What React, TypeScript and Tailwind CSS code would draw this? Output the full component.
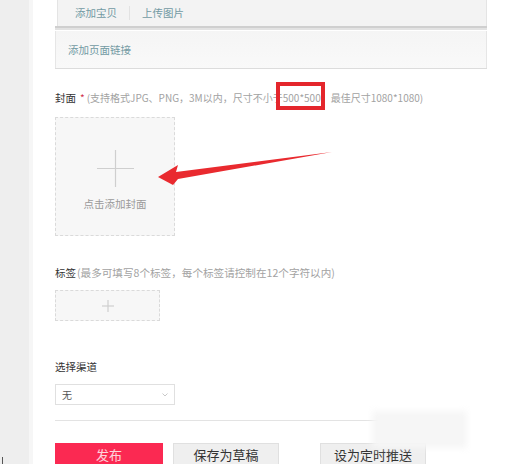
const font = { fontFamily: '"Noto Sans CJK SC", "Noto Sans", sans-serif' };

function Plus({ size, className }: { size: number; className?: string }) {
  return (
    <svg width={size} height={size} viewBox={`0 0 ${size} ${size}`} className={className}>
      <line x1={0} y1={size / 2} x2={size} y2={size / 2} stroke="#cfcfcf" strokeWidth={1.2} />
      <line x1={size / 2} y1={0} x2={size / 2} y2={size} stroke="#cfcfcf" strokeWidth={1.2} />
    </svg>
  );
}

function TopPanel() {
  return (
    <div className="w-[432px] shrink-0 border-b border-[#dcdcdc]">
      <div className="ml-[2px] h-[26px] bg-[#f3f3f3] border-x border-[#e4e4e4] flex items-center pl-[17px] text-[10.5px] text-[#729aa3]">
        <span>添加宝贝</span>
        <span className="mx-[12px] h-[14px] w-px bg-[#e2e2e2]" />
        <span>上传图片</span>
      </div>
      <div className="h-[2px] bg-[#cfcfcf]" />
      <div className="h-[2px] bg-[#e2e2e2]" />
      <div className="h-px bg-white" />
      <div className="h-[37px] bg-gradient-to-b from-[#f5f5f5] to-[#f9f9f9] border-x border-[#e6e6e6] flex items-center pl-[12px] text-[10.5px] text-[#729aa3]">
        添加页面链接
      </div>
    </div>
  );
}

function Arrow() {
  return (
    <svg className="absolute left-0 top-0" width={517} height={474} viewBox="0 0 517 474">
      <polygon
        points="158,177 178,165 176,172 332,152 178,179 173,185"
        fill="#e92a2f"
      />
    </svg>
  );
}

export default function App() {
  return (
    <div className="relative w-[517px] h-[474px] bg-white overflow-hidden" style={font}>
      <div className="flex h-[464px] overflow-hidden">
        <div className="w-[29px] bg-[#eeeeee] shrink-0" />
        <div className="w-[4px] bg-[#f6f6f6] shrink-0" />
        <div className="pl-[22px] flex flex-col">
          <TopPanel />

          <div className="mt-[21px] shrink-0 flex items-center h-[16px] leading-none">
            <span className="text-[10.5px] text-[#333]">封面</span>
            <span className="ml-[4px] text-[10px] text-[#d0304a]">*</span>
            <span className="ml-[2px] text-[10px] text-[#a2a2a2]">
              (支持格式JPG、PNG，3M以内，尺寸不小于500*500，最佳尺寸1080*1080)
            </span>
          </div>

          <div className="mt-[11px] shrink-0 w-[120px] h-[119px] border border-dashed border-[#dadada] bg-[#f7f7f7] flex flex-col items-center">
            <Plus size={37} className="mt-[32px]" />
            <span className="mt-[9px] text-[10.5px] text-[#9a9a9a]">点击添加封面</span>
          </div>

          <div className="mt-[29px] shrink-0 flex items-center h-[16px] leading-none">
            <span className="text-[10.5px] text-[#333]">标签</span>
            <span className="ml-[1px] text-[10.6px] text-[#a2a2a2]">
              (最多可填写8个标签，每个标签请控制在12个字符以内)
            </span>
          </div>

          <div className="mt-[9px] shrink-0 w-[105px] h-[31px] border border-dashed border-[#dadada] bg-[#f7f7f7] flex items-center justify-center">
            <Plus size={12} />
          </div>

          <div className="mt-[38px] shrink-0 h-[16px] flex items-center text-[10.5px] text-[#333] leading-none">
            选择渠道
          </div>

          <div className="mt-[9px] shrink-0 w-[120px] h-[21px] border border-[#e0e0e0] flex items-center justify-between px-[6px] text-[10px] text-[#555]">
            <span>无</span>
            <svg width="6" height="4" viewBox="0 0 6 4">
              <path d="M0.5 0.5 L3 3 L5.5 0.5" fill="none" stroke="#bbb" strokeWidth="0.8" />
            </svg>
          </div>

          <div className="mt-[15px] shrink-0 w-[327px] h-px bg-[#e3e3e3]" />

          <div className="mt-[22px] shrink-0 flex">
            <button className="w-[108px] h-[23px] bg-[#fb2952] text-white/80 text-[13px] leading-[23px]">发布</button>
            <button className="ml-[10px] w-[106px] h-[23px] bg-[#efefef] border border-b-0 border-[#e0e0e0] text-[#333] text-[13px] leading-[22px]">
              保存为草稿
            </button>
            <button className="ml-[41px] w-[106px] h-[23px] bg-[#efefef] border border-b-0 border-[#e0e0e0] text-[#333] text-[13px] leading-[22px]">
              设为定时推送
            </button>
          </div>
        </div>
      </div>

      {/* annotations */}
      <div className="absolute left-[276px] top-[82px] w-[49px] h-[28px] border-[4px] border-[#e4262c]" />
      <Arrow />
      <div className="absolute left-[372px] top-[411px] w-[95px] h-[37px] bg-[#f6f6f6] blur-[3px]" />
      <div className="absolute left-[2px] top-[457px] w-px h-[7px] bg-[#555]" />
    </div>
  );
}
